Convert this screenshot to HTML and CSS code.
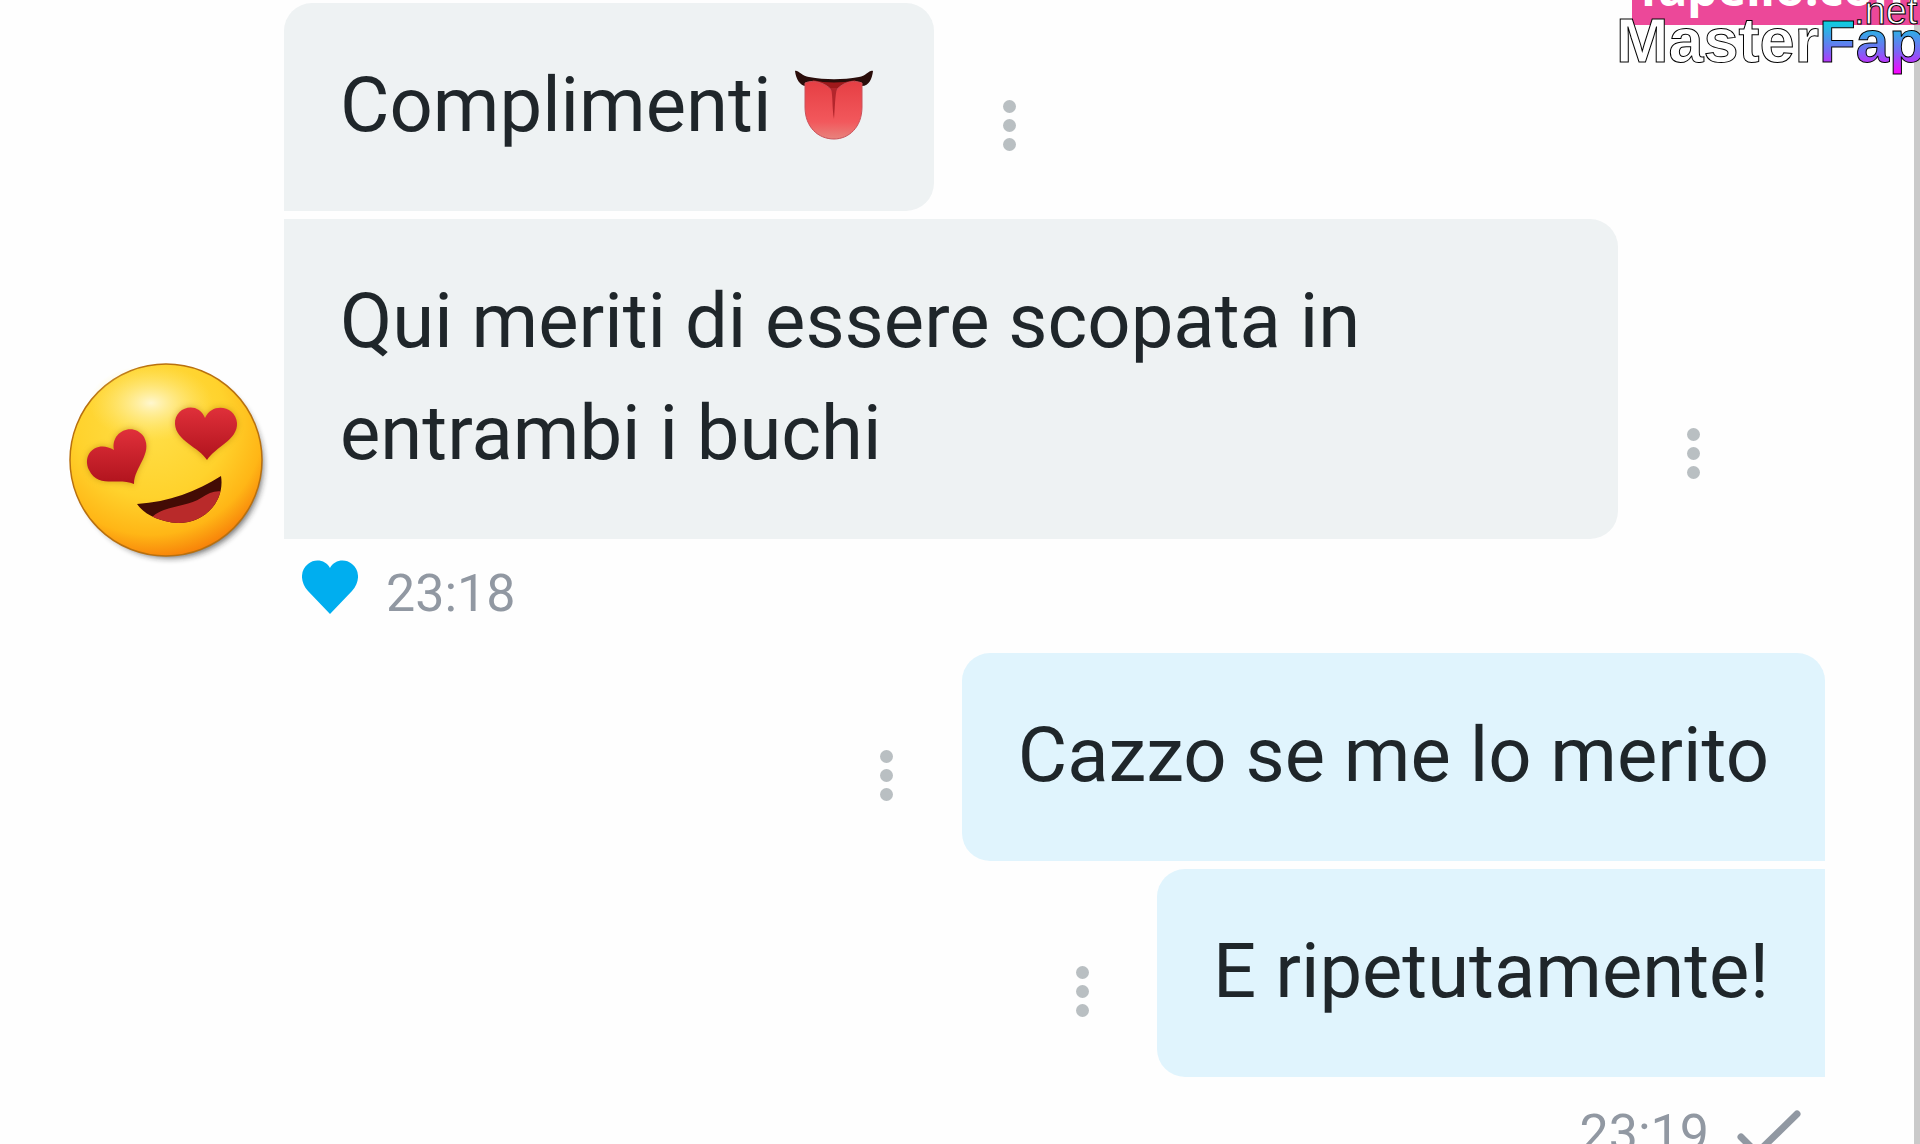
FILE: index.html
```
<!DOCTYPE html>
<html lang="it">
<head>
    <meta charset="UTF-8">
    <meta name="viewport" content="width=device-width, initial-scale=1.0">
    <title>Chat</title>
    <link rel="stylesheet" href="styles.css">
</head>
<body>

    <main class="chat">
        <section class="group incoming">
            <svg class="sticker" viewBox="0 0 210 210" role="img" aria-label="Heart eyes">
                <defs>
                    <radialGradient id="face" cx="0.42" cy="0.3" r="0.72">
                        <stop offset="0" stop-color="#ffe04a"/>
                        <stop offset="0.55" stop-color="#ffd22c"/>
                        <stop offset="0.82" stop-color="#ffb616"/>
                        <stop offset="1" stop-color="#f77f08"/>
                    </radialGradient>
                    <radialGradient id="shine">
                        <stop offset="0" stop-color="#fff7cf"/>
                        <stop offset="1" stop-color="#ffe875" stop-opacity="0"/>
                    </radialGradient>
                    <linearGradient id="heart" x1="0" y1="0" x2="0" y2="1">
                        <stop offset="0" stop-color="#e0303a"/>
                        <stop offset="1" stop-color="#b0131d"/>
                    </linearGradient>
                    <filter id="soft" x="-20%" y="-20%" width="140%" height="140%">
                        <feGaussianBlur stdDeviation="3"/>
                    </filter>
                    <clipPath id="mouth">
                        <path d="M76 149C108 147 136 136 160 121C164 145 145 168 117 168C97 167 82 158 76 149Z"/>
                    </clipPath>
                </defs>
                <circle cx="109" cy="110" r="93" fill="#222" opacity="0.65" filter="url(#soft)"/>
                <circle cx="105" cy="105" r="96" fill="url(#face)" stroke="#b8700f" stroke-width="1.5"/>
                <ellipse cx="90" cy="48" rx="62" ry="38" fill="url(#shine)"/>
                <path d="M145 105C137 92 115 86 114 69C113 52 137 45 144 63C152 46 175 52 176 68C177 85 155 92 145 105Z" fill="#a56800" opacity="0.5" filter="url(#soft)"/>
                <path d="M146 105C138 92 115 86 114 69C113 52 137 45 144 63C152 46 175 52 176 68C177 85 154 92 146 105Z" fill="url(#heart)"/>
                <path d="M73 130C58 122 37 134 28 115C20 97 38 85 53 95C49 77 72 66 83 82C92 99 73 112 73 130Z" fill="#a56800" opacity="0.5" filter="url(#soft)"/>
                <path d="M73 129C58 122 37 134 28 115C20 97 38 85 53 95C49 77 72 66 83 82C92 99 73 112 73 129Z" fill="url(#heart)"/>
                <g clip-path="url(#mouth)">
                    <rect x="70" y="115" width="100" height="60" fill="#430b05"/>
                    <path d="M88 166C98 150 125 153 140 143C149 137 157 134 165 138V175H88Z" fill="#b92a2a"/>
                </g>
            </svg>
            <div class="messages">
                <div class="row">
                    <p class="bubble">Complimenti <svg class="tongue" viewBox="0 0 80 72" role="img" aria-label="Tongue">
                        <defs>
                            <linearGradient id="tongue" x1="0" y1="0" x2="0" y2="1">
                                <stop offset="0" stop-color="#e63f44"/>
                                <stop offset="0.7" stop-color="#f2585c"/>
                                <stop offset="1" stop-color="#e8837d"/>
                            </linearGradient>
                        </defs>
                        <path d="M1 2C3 0 8 7 15 8C32 11 48 11 65 8C72 7 76 0 79 2C78 10 75 17 68 17H12C6 17 2 10 1 2Z" fill="#2a0d0a"/>
                        <path d="M18 11Q40 16 62 11L44 24H36Z" fill="#9e191b"/>
                        <path d="M11 14C19 10 35 14 40 25C45 14 59 10 68 14V38C68 58 55 70 40 70C24 70 11 58 11 38Z" fill="url(#tongue)" stroke="#c9525a" stroke-width="1"/>
                        <path d="M37 19H43C41 27 41 38 40 50C38 39 39 28 37 19Z" fill="#b3262c"/>
                    </svg></p>
                    <button class="menu" type="button" aria-label="More"><span class="dot"></span><span class="dot"></span><span class="dot"></span></button>
                </div>
                <div class="row">
                    <p class="bubble">Qui meriti di essere scopata in entrambi i buchi</p>
                    <button class="menu" type="button" aria-label="More"><span class="dot"></span><span class="dot"></span><span class="dot"></span></button>
                </div>
                <div class="meta">
                    <svg class="like" viewBox="0 0 56 54" aria-hidden="true">
                        <path d="M28 54L6 31C-3 21 -1 9 6 4C13 -2 24 0 28 8C32 0 43 -2 50 4C57 9 59 21 50 31Z" fill="#00aeef"/>
                    </svg>
                    <time>23:18</time>
                </div>
            </div>
        </section>

        <section class="group outgoing">
            <div class="messages">
                <div class="row">
                    <button class="menu" type="button" aria-label="More"><span class="dot"></span><span class="dot"></span><span class="dot"></span></button>
                    <p class="bubble">Cazzo se me lo merito</p>
                </div>
                <div class="row">
                    <button class="menu" type="button" aria-label="More"><span class="dot"></span><span class="dot"></span><span class="dot"></span></button>
                    <p class="bubble">E ripetutamente!</p>
                </div>
                <div class="meta">
                    <time>23:19</time>
                    <svg class="check" viewBox="0 0 64 48" aria-hidden="true">
                        <path d="M4 27L20 43L60 4" fill="none" stroke="#9198a2" stroke-width="7" stroke-linecap="round"/>
                    </svg>
                </div>
            </div>
        </section>
    </main>

    <div class="watermark">
        <div class="banner">fapello.com</div>
        <svg class="logo" viewBox="0 0 304 90">
            <defs>
                <linearGradient id="fap" gradientUnits="userSpaceOnUse" x1="0" y1="18" x2="0" y2="74">
                    <stop offset="0" stop-color="#00dcdc"/>
                    <stop offset="0.6" stop-color="#7a66f5"/>
                    <stop offset="1" stop-color="#ff00ff"/>
                </linearGradient>
            </defs>
            <text class="logo-name" x="0" y="62">Master<tspan class="logo-fap">Fap</tspan></text>
            <text class="logo-tld" x="238" y="24">.net</text>
        </svg>
    </div>

</body>
</html>
```
FILE: styles.css
```
* {
    box-sizing: border-box;
}
body {
    margin: 0;
    height: 100vh;
    overflow: hidden;
    position: relative;
    font-family: Roboto, "Liberation Sans", sans-serif;
    background-color: #fefefe;
    color: #1f262a;
}
.chat {
    min-height: 100vh;
    padding: 3px 89px 0 0;
    border-right: 6px solid #cacaca;
}
.group {
    display: flex;
}
.sticker {
    width: 210px;
    height: 210px;
    flex: none;
    align-self: flex-end;
    margin: 0 13px 88px 61px;
}
.messages {
    flex: 1;
    min-width: 0;
}
.row {
    display: flex;
    align-items: flex-end;
    margin-bottom: 8px;
}
.row:nth-last-child(2) {
    margin-bottom: 0;
}
.incoming .row {
    padding-right: 57px;
}
.outgoing .row {
    justify-content: flex-end;
}
.bubble {
    margin: 0;
    padding: 46px 56px 50px;
    font-size: 76px;
    line-height: 112px;
    background-color: #eef2f3;
    border-radius: 0 28px 28px 0;
}
.incoming .row:first-child .bubble {
    border-top-left-radius: 28px;
}
.outgoing .bubble {
    background-color: #e0f4fd;
    border-radius: 28px 0 0 28px;
}
.outgoing .row:first-child .bubble {
    border-top-right-radius: 28px;
}
.tongue {
    width: 80px;
    height: 72px;
    margin: 0 4px;
    vertical-align: -10px;
}
.menu {
    display: flex;
    flex: none;
    flex-direction: column;
    align-items: center;
    justify-content: center;
    gap: 6px;
    width: 150px;
    height: 172px;
    padding: 0;
    border: none;
    background: none;
    cursor: pointer;
}
.dot {
    width: 13px;
    height: 13px;
    border-radius: 50%;
    background-color: #b9bfc2;
}
.meta {
    display: flex;
    align-items: center;
    gap: 28px;
    height: 114px;
    padding: 0 24px 4px 18px;
    font-size: 52px;
    line-height: 64px;
    color: #9198a2;
}
.outgoing .meta {
    justify-content: flex-end;
    height: 118px;
}
.like {
    width: 56px;
    height: 54px;
    margin-bottom: 14px;
}
.check {
    width: 64px;
    height: 48px;
}
.watermark {
    position: absolute;
    top: 0;
    right: 0;
    width: 304px;
    height: 90px;
    overflow: hidden;
}
.banner {
    display: flex;
    align-items: flex-end;
    height: 25px;
    margin-left: 16px;
    padding-left: 8px;
    overflow: hidden;
    background-color: #ec4899;
    color: white;
    font-family: "Noto Sans", sans-serif;
    font-size: 48px;
    font-weight: bold;
    line-height: 75px;
    white-space: nowrap;
}
.logo {
    position: absolute;
    top: 0;
    left: 0;
    width: 304px;
    height: 90px;
}
.logo-name {
    font: bold 63px "Liberation Sans", sans-serif;
    fill: white;
    stroke: black;
    stroke-width: 1px;
}
.logo-fap {
    font-size: 60px;
    fill: url(#fap);
}
.logo-tld {
    font: 38px "Liberation Sans", sans-serif;
    fill: white;
    stroke: black;
    stroke-width: 1px;
}
```
